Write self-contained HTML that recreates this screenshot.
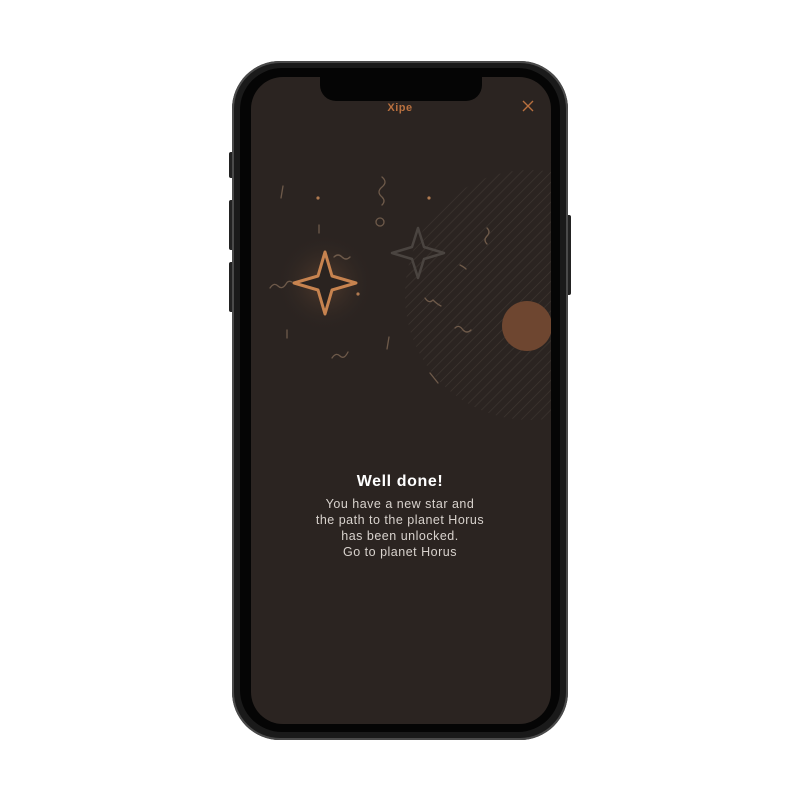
<!DOCTYPE html>
<html><head><style>
html,body{margin:0;padding:0;background:#fff;width:800px;height:800px;overflow:hidden;font-family:"Liberation Sans",sans-serif}
.abs{position:absolute}
</style></head><body>
<div class="abs" style="left:229px;top:152px;width:5px;height:26px;background:#222;border-radius:2px"></div>
<div class="abs" style="left:229px;top:200px;width:5px;height:50px;background:#222;border-radius:2px"></div>
<div class="abs" style="left:229px;top:262px;width:5px;height:50px;background:#222;border-radius:2px"></div>
<div class="abs" style="left:566px;top:215px;width:5px;height:80px;background:#222;border-radius:2px"></div>
<div class="abs" style="left:232px;top:61px;width:336px;height:679px;background:#1a1a1a;border-radius:48px;box-shadow:inset 0 0 0 2px #4a4a4a"></div>
<div class="abs" style="left:240px;top:68px;width:320px;height:664px;background:#050505;border-radius:42px"></div>
<svg class="abs" style="left:251px;top:77px" width="300" height="647" viewBox="251 77 300 647">
<defs>
<clipPath id="c"><rect x="251" y="77" width="300" height="647" rx="32"/></clipPath>
<pattern id="h" width="7" height="7" patternUnits="userSpaceOnUse" patternTransform="rotate(45)"><line x1="0" y1="0" x2="0" y2="7" stroke="#3e3631" stroke-width="1.3"/></pattern>
<radialGradient id="g"><stop offset="0" stop-color="#6b4a34" stop-opacity=".6"/><stop offset="1" stop-color="#2a2421" stop-opacity="0"/></radialGradient>
</defs>
<g clip-path="url(#c)">
<rect x="251" y="77" width="300" height="647" fill="#2b2421"/>
<circle cx="530" cy="295" r="125" fill="url(#h)"/>
<circle cx="527" cy="326" r="25" fill="#6e4630"/>
<circle cx="325" cy="283" r="50" fill="url(#g)"/>
<path d="M325 252 L332 276 L356 283 L332 290 L325 314 L318 290 L294 283 L318 276 Z" fill="#2a2320" stroke="#c7834f" stroke-width="3" stroke-linejoin="round"/>
<path d="M418 228 L424 247 L444 253 L424 259 L418 278 L412 259 L392 253 L412 247 Z" fill="none" stroke="#4a4440" stroke-width="2.5" stroke-linejoin="round"/>
<g fill="none" stroke="#6e5a4a" stroke-width="1.3" stroke-linecap="round">
<path d="M382 177 q6 5 0 10 q-6 5 0 10 q4 4 0 8"/>
<path d="M283 186 l-2 12"/><path d="M319 225 l0 8"/>
<circle cx="380" cy="222" r="4"/>
<path d="M487 228 q4 4 0 8 q-4 4 0 8"/>
<path d="M270 288 q4 -6 8 -2 q4 4 8 -2 q2 -4 6 -2"/>
<path d="M334 257 q4 -4 8 0 q4 4 8 0"/>
<path d="M425 298 q4 6 8 2 q4 4 8 6"/>
<path d="M455 328 q4 -4 8 2 q4 4 8 0"/>
<path d="M287 330 l0 8"/><path d="M389 337 l-2 12"/>
<path d="M332 358 q4 -6 8 -2 q4 4 8 -4"/>
<path d="M430 373 l8 10"/>
<path d="M460 265 q4 2 6 4"/>
</g>
<g fill="#b07a50"><circle cx="318" cy="198" r="1.6"/><circle cx="429" cy="198" r="1.6"/><circle cx="358" cy="294" r="1.6"/></g>
<text x="400" y="111" text-anchor="middle" font-family="Liberation Sans" font-weight="bold" font-size="11" fill="#b8703f" letter-spacing=".5">Xipe</text>
<path d="M523 101 l10 10 M533 101 l-10 10" stroke="#b8703f" stroke-width="1.4"/>
<text x="400" y="486" text-anchor="middle" font-family="Liberation Sans" font-weight="bold" font-size="16" fill="#fff" letter-spacing=".6">Well done!</text>
<g font-family="Liberation Sans" font-size="12.5" fill="#d8d2cd" text-anchor="middle" letter-spacing=".5">
<text x="400" y="508">You have a new star and</text>
<text x="400" y="524">the path to the planet Horus</text>
<text x="400" y="540">has been unlocked.</text>
<text x="400" y="556">Go to planet Horus</text>
</g>
</g>
</svg>
<div class="abs" style="left:320px;top:77px;width:162px;height:24px;background:#050505;border-radius:0 0 16px 16px"></div>
</body></html>
